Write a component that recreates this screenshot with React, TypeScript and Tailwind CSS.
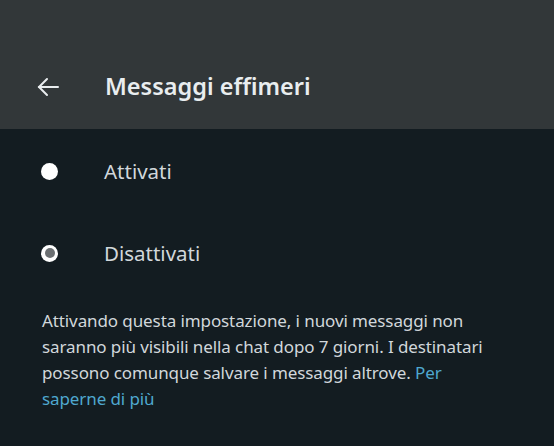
const options = [
  { label: "Attivati", selected: false },
  { label: "Disattivati", selected: true },
];

function BackArrow() {
  return (
    <svg width="24" height="24" viewBox="0 0 24 24" fill="none" stroke="#e9edef" strokeWidth="2" strokeLinecap="round">
      <path d="M22 12H3" />
      <path d="M11 4 3 12l8 8" />
    </svg>
  );
}

export default function App() {
  return (
    <div className="flex h-[446px] w-[554px] flex-col bg-[#131c21] font-['Noto_Sans',sans-serif]">
      <header className="flex h-[129px] shrink-0 items-end bg-[#323739] pb-[22px]">
        <div className="flex h-[40px] items-center">
          <div className="flex w-[105px] justify-center pr-[10px]">
            <BackArrow />
          </div>
          <h1 className="text-[23.5px] font-semibold text-[#e9edef]">Messaggi effimeri</h1>
        </div>
      </header>

      <div className="flex flex-col pt-[1px]">
        {options.map((opt) => (
          <div key={opt.label} className="flex h-[82px] items-center">
            <div className="flex w-[104px] justify-start pl-[41px]">
              <div className="flex h-[17px] w-[17px] items-center justify-center rounded-full bg-white">
                {opt.selected && <div className="h-[10px] w-[10px] rounded-full bg-[#6b6f72]" />}
              </div>
            </div>
            <span className="text-[20.5px] leading-[28px] text-[#d1d7db]">{opt.label}</span>
          </div>
        ))}
      </div>

      <p className="mt-[14px] whitespace-nowrap pl-[42px] text-[17px] leading-[26px] tracking-[-0.1px] text-[#d1d7db]">
        Attivando questa impostazione, i nuovi messaggi non
        <br />
        saranno più visibili nella chat dopo 7 giorni. I destinatari
        <br />
        possono comunque salvare i messaggi altrove. <span className="text-[#4fa8cf]">Per</span>
        <br />
        <span className="text-[#4fa8cf]">saperne di più</span>
      </p>
    </div>
  );
}
